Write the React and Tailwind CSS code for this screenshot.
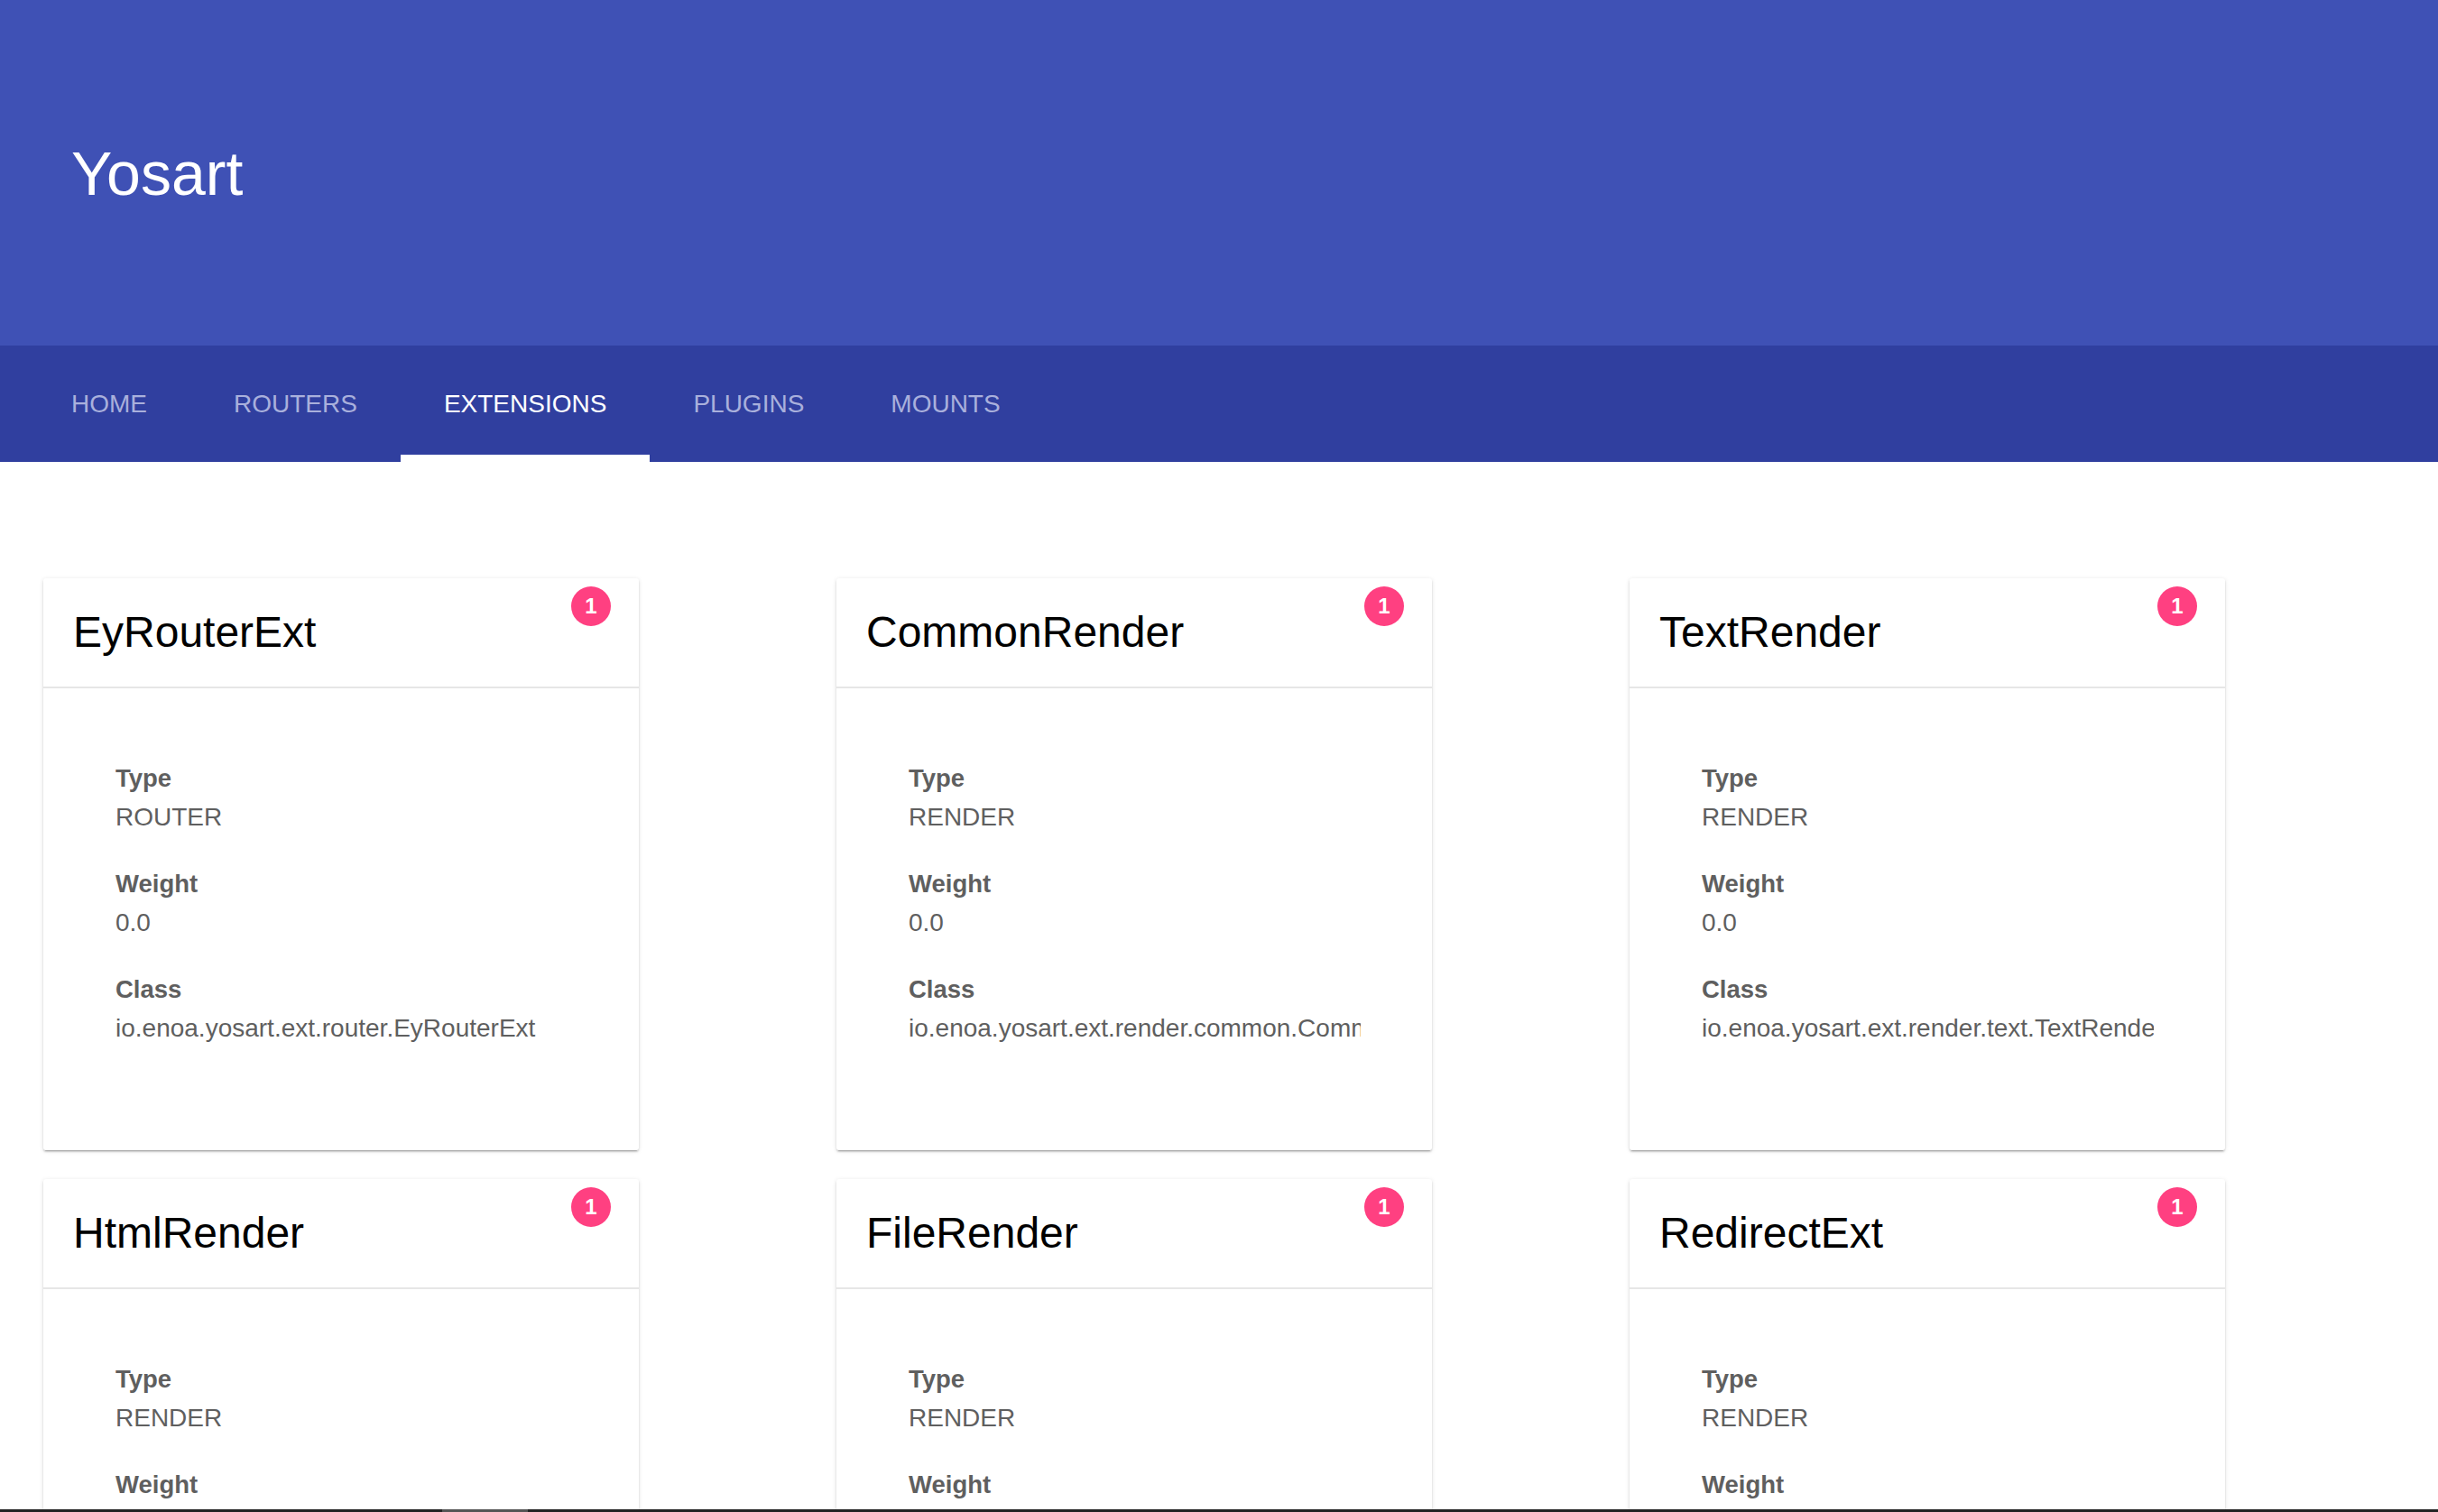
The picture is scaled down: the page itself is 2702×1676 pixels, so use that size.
const tabs = ['Home', 'Routers', 'Extensions', 'Plugins', 'Mounts'];

const extensions = [
  { name: 'EyRouterExt', type: 'ROUTER', weight: '0.0', clazz: 'io.enoa.yosart.ext.router.EyRouterExt' },
  { name: 'CommonRender', type: 'RENDER', weight: '0.0', clazz: 'io.enoa.yosart.ext.render.common.CommonRender' },
  { name: 'TextRender', type: 'RENDER', weight: '0.0', clazz: 'io.enoa.yosart.ext.render.text.TextRender' },
  { name: 'HtmlRender', type: 'RENDER', weight: '0.0', clazz: 'io.enoa.yosart.ext.render.html.HtmlRender' },
  { name: 'FileRender', type: 'RENDER', weight: '0.0', clazz: 'io.enoa.yosart.ext.render.file.FileRender' },
  { name: 'RedirectExt', type: 'RENDER', weight: '0.0', clazz: 'io.enoa.yosart.ext.redirect.RedirectExt' },
];

function Field({ label, value, last }) {
  return (
    <div className={last ? '' : 'mb-[32px]'}>
      <div className="text-[27.5px] font-bold leading-[42px] text-[#5f5f5f]">{label}</div>
      <div className="overflow-hidden whitespace-nowrap text-[28px] leading-[43px] text-[#5f5f5f]">{value}</div>
    </div>
  );
}

function ExtCard({ ext }) {
  return (
    <div className="relative w-[660px] h-[634px] overflow-hidden rounded-[3px] bg-white shadow-[0_2px_2px_0_rgba(0,0,0,0.14),0_3px_1px_-2px_rgba(0,0,0,0.2),0_1px_5px_0_rgba(0,0,0,0.12)]">
      <div className="flex h-[122px] items-center border-b-2 border-[#e6e6e6] px-[33px]">
        <h2 className="text-[48px] leading-none text-black">{ext.name}</h2>
      </div>
      <span className="absolute right-[31px] top-[9px] flex h-[44px] w-[44px] items-center justify-center rounded-full bg-[#ff4081] text-[24px] font-bold text-white">
        1
      </span>
      <div className="pl-[80px] pr-[79px] pt-[79px]">
        <Field label="Type" value={ext.type} />
        <Field label="Weight" value={ext.weight} />
        <Field label="Class" value={ext.clazz} last />
      </div>
    </div>
  );
}

export default function App() {
  return (
    <div className="min-h-screen bg-white font-['Liberation_Sans',Arial,sans-serif]">
      <header className="bg-[#3f51b5]">
        <div className="flex h-[383px] items-center px-[79px]">
          <h1 className="text-[68px] leading-none text-white">Yosart</h1>
        </div>
        <nav className="flex h-[129px] bg-[#303f9f] pl-[31px]">
          {tabs.map((t) => {
            const active = t === 'Extensions';
            return (
              <div
                key={t}
                className={[
                  'relative flex h-full items-center px-[48px] text-[28px] uppercase',
                  active ? 'text-white' : 'text-[#a9b0dc]',
                ].join(' ')}
              >
                {t}
                {active && <span className="absolute bottom-0 left-0 h-[8px] w-full bg-white" />}
              </div>
            );
          })}
        </nav>
      </header>

      <main className="grid grid-cols-[repeat(3,660px)] gap-x-[219px] gap-y-[32px] px-[48px] pt-[129px] pb-[60px]">
        {extensions.map((ext) => (
          <ExtCard key={ext.name} ext={ext} />
        ))}
      </main>

      <div className="fixed bottom-0 left-0 h-[3px] w-full bg-[#232323]">
        <div className="ml-[490px] h-full w-[95px] bg-[#555555]" />
      </div>
    </div>
  );
}
